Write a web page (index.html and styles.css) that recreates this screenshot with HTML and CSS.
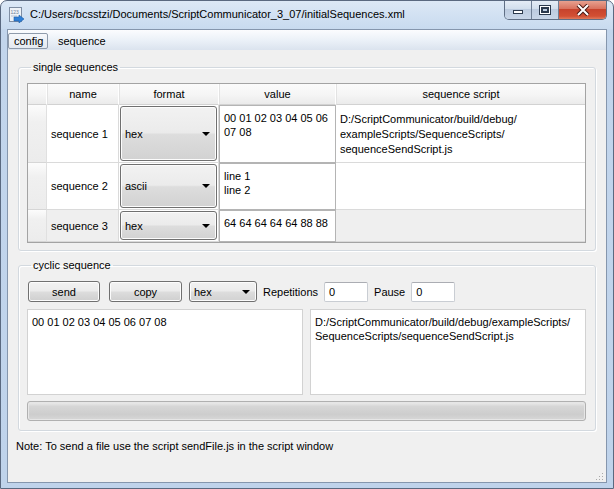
FILE: index.html
```html
<!DOCTYPE html>
<html lang="en">
<head>
    <meta charset="UTF-8">
    <title>initialSequences.xml</title>
    <link rel="stylesheet" href="styles.css">
</head>
<body>
<div class="window">
    <div class="titlebar">
        <svg class="app-icon" width="16" height="16" viewBox="0 0 16 16">
            <rect x="0.5" y="0.5" width="12" height="14" fill="#eef2f7" stroke="#7f8ea3"/>
            <text x="1.5" y="6.5" font-size="5" font-family="Liberation Sans, sans-serif" fill="#6d7f99">123</text>
            <line x1="2" y1="9" x2="8" y2="9" stroke="#b7c3d3"/>
            <polygon points="5,10 10,10 10,8 15,12 10,16 10,14 5,14" fill="#2f7fd6" stroke="#1f5fa8" stroke-width="0.6"/>
        </svg>
        <span class="title">C:/Users/bcsstzi/Documents/ScriptCommunicator_3_07/initialSequences.xml</span>
        <div class="caption-buttons">
            <div class="cap-btn cap-min">
                <svg width="12" height="6" viewBox="0 0 12 6"><rect x="1.5" y="1.5" width="9" height="3" fill="#fff" stroke="#2c3a4d"/></svg>
            </div>
            <div class="cap-btn cap-max">
                <svg width="12" height="10" viewBox="0 0 12 10"><rect x="1.5" y="1.5" width="9" height="7" fill="none" stroke="#2c3a4d" stroke-width="3"/><rect x="1.5" y="1.5" width="9" height="7" fill="none" stroke="#fff"/><rect x="3.5" y="3.5" width="5" height="3" fill="none" stroke="#2c3a4d"/></svg>
            </div>
            <div class="cap-btn cap-close">
                <svg width="14" height="12" viewBox="0 0 14 12"><path d="M2 1 L12 11 M12 1 L2 11" stroke="#4a1a14" stroke-width="4"/><path d="M2 1 L12 11 M12 1 L2 11" stroke="#fff" stroke-width="2"/></svg>
            </div>
        </div>
    </div>

    <div class="client">
        <div class="menubar">
            <span class="menu-item active">config</span>
            <span class="menu-item">sequence</span>
        </div>

        <div class="content">
            <fieldset class="group group-single">
                <legend>single sequences</legend>
                <div class="table-frame">
                    <div class="grid">
                        <div class="cell hcorner"></div>
                        <div class="cell hcell">name</div>
                        <div class="cell hcell">format</div>
                        <div class="cell hcell">value</div>
                        <div class="cell hcell last">sequence script</div>

                        <div class="cell vhead"></div>
                        <div class="cell name">sequence 1</div>
                        <div class="cell fmt"><div class="combo">hex<span class="arrow"></span></div></div>
                        <div class="cell val"><div class="editor">00 01 02 03 04 05 06<br>07 08</div></div>
                        <div class="cell script">D:/ScriptCommunicator/build/debug/<br>exampleScripts/SequenceScripts/<br>sequenceSendScript.js</div>

                        <div class="cell vhead"></div>
                        <div class="cell name">sequence 2</div>
                        <div class="cell fmt"><div class="combo">ascii<span class="arrow"></span></div></div>
                        <div class="cell val"><div class="editor">line 1<br>line 2</div></div>
                        <div class="cell script"></div>

                        <div class="cell vhead"></div>
                        <div class="cell name alt">sequence 3</div>
                        <div class="cell fmt"><div class="combo">hex<span class="arrow"></span></div></div>
                        <div class="cell val"><div class="editor">64 64 64 64 64 88 88</div></div>
                        <div class="cell script alt"></div>
                    </div>
                </div>
            </fieldset>

            <fieldset class="group group-cyclic">
                <legend>cyclic sequence</legend>
                <div class="controls">
                    <div class="button btn-send">send</div>
                    <div class="button btn-copy">copy</div>
                    <div class="combo combo-small">hex<span class="arrow"></span></div>
                    <span class="label lbl-rep">Repetitions</span>
                    <div class="textbox">0</div>
                    <span class="label lbl-pause">Pause</span>
                    <div class="textbox">0</div>
                </div>
                <div class="text-areas">
                    <div class="textarea">00 01 02 03 04 05 06 07 08</div>
                    <div class="textarea">D:/ScriptCommunicator/build/debug/exampleScripts/<br>SequenceScripts/sequenceSendScript.js</div>
                </div>
                <div class="progress"></div>
            </fieldset>

            <p class="note">Note: To send a file use the script sendFile.js in the script window</p>
        </div>

        <svg class="size-grip" width="9" height="9" viewBox="0 0 9 9">
            <rect x="7" y="1" width="1" height="1" fill="#a9a9a9"/>
            <rect x="4" y="4" width="1" height="1" fill="#a9a9a9"/>
            <rect x="7" y="4" width="1" height="1" fill="#a9a9a9"/>
            <rect x="1" y="7" width="1" height="1" fill="#a9a9a9"/>
            <rect x="4" y="7" width="1" height="1" fill="#a9a9a9"/>
            <rect x="7" y="7" width="1" height="1" fill="#a9a9a9"/>
        </svg>
    </div>
</div>
</body>
</html>
```

FILE: styles.css
```css
* {
    box-sizing: border-box;
}
body {
    margin: 0;
    font-family: "Liberation Sans", Arial, sans-serif;
    font-size: 11px;
    color: #000;
    background: #fff;
}
.window {
    width: 614px;
    height: 489px;
    border: 1px solid #5a6980;
    border-radius: 7px 7px 0 0;
    background: linear-gradient(#dce8f6 0, #c8daef 28px, #c2d5ec 29px, #bfd3eb 100%);
    display: flex;
    flex-direction: column;
    overflow: hidden;
}
.titlebar {
    height: 28px;
    display: flex;
    align-items: flex-start;
    padding-left: 8px;
}
.app-icon {
    margin-top: 6px;
    flex: none;
}
.title {
    margin-left: 5px;
    margin-top: 7px;
    font-size: 11px;
    color: #000;
}
.caption-buttons {
    margin-left: auto;
    margin-right: 6px;
    display: flex;
    height: 20px;
    margin-top: -1px;
    border: 1px solid #5f6e84;
    border-top: none;
    border-radius: 0 0 5px 5px;
    overflow: hidden;
}
.cap-btn {
    height: 19px;
    display: flex;
    align-items: center;
    justify-content: center;
    background: linear-gradient(#e7eef7 0, #d3dfed 45%, #bccbdf 50%, #c8d6e8 100%);
}
.cap-min {
    width: 27px;
    border-right: 1px solid #6f7f95;
    padding-top: 5px;
}
.cap-max {
    width: 27px;
    border-right: 1px solid #6f7f95;
}
.cap-close {
    width: 47px;
    background: linear-gradient(#e9a796 0, #d9735f 45%, #c7432c 50%, #d24f33 85%, #e07a5c 100%);
}
.client {
    flex: 1;
    margin: 0 6px 5px 6px;
    border: 1px solid #8596ad;
    background: #f0f0f0;
    display: flex;
    flex-direction: column;
    position: relative;
}
.menubar {
    height: 20px;
    display: flex;
    align-items: center;
    background: linear-gradient(#fbfcfe 0, #eaf0f7 55%, #dbe3ee 100%);
}
.menu-item {
    height: 16px;
    line-height: 14px;
    padding: 0 7px;
    border: 1px solid transparent;
    margin-top: 1px;
}
.menu-item.active {
    border: 1px solid #8f9bab;
    border-radius: 2px;
    background: linear-gradient(#f6f8fb, #e4e9f0);
    padding: 0 5px;
    width: 40px;
    text-align: center;
    margin-right: 2px;
}
.content {
    flex: 1;
    padding: 10px 10px 0 10px;
    display: flex;
    flex-direction: column;
}
.group {
    margin: 0;
    border: 1px solid #d3d9df;
    border-radius: 3px;
    box-shadow: inset 1px 1px 0 #fff, 1px 1px 0 #fff;
    padding: 9px 9px 7px 8px;
    min-width: 0;
}
.group legend {
    padding: 0 2px;
    margin-left: 4px;
    line-height: 14px;
}
.group-cyclic {
    margin-top: 7px;
    padding-top: 9px;
    padding-bottom: 9px;
}
.table-frame {
    border: 1px solid #a3a3a3;
    background: #fff;
}
.grid {
    display: grid;
    grid-template-columns: 19px 72px 100px 117px 249px;
    grid-template-rows: 21px 58px 47px 32px;
}
.cell {
    border-right: 1px solid #dadada;
    border-bottom: 1px solid #dadada;
    display: flex;
    align-items: center;
    background: #fff;
}
.hcorner, .hcell {
    background: linear-gradient(#fbfbfb 0, #f5f5f5 55%, #ebebeb 100%);
    border-right: 1px solid #fff;
    border-left: 1px solid #e3e3e3;
    border-bottom: 1px solid #d2d2d2;
}
.hcorner {
    border-left: none;
}
.hcell {
    justify-content: center;
    padding-bottom: 1px;
}
.hcell.last {
    border-right: none;
}
.vhead {
    background: linear-gradient(#fcfcfc 0, #f0f0f0 30%, #ececec 100%);
    border-right: 1px solid #e0e0e0;
    border-bottom: 1px solid #d6d6d6;
}
.name {
    padding-left: 4px;
}
.alt {
    background: #efefef;
}
.fmt {
    padding: 1px;
    align-items: stretch;
}
.fmt .combo {
    flex: 1;
}
.combo {
    position: relative;
    display: flex;
    align-items: center;
    padding-left: 4px;
    border: 1px solid #707070;
    border-radius: 3px;
    background: linear-gradient(#f2f2f2 0, #ebebeb 48%, #dddddd 52%, #d2d2d2 100%);
    box-shadow: inset 0 0 0 1px #fcfcfc;
}
.arrow {
    position: absolute;
    right: 6px;
    top: 50%;
    margin-top: -2px;
    border-left: 4px solid transparent;
    border-right: 4px solid transparent;
    border-top: 4px solid #000;
}
.val {
    border: none;
    align-items: stretch;
}
.editor {
    flex: 1;
    border: 1px solid #b4b4b4;
    background: #fff;
    padding: 5px 4px 0 4px;
    line-height: 14px;
}
.script {
    align-items: flex-start;
    padding: 7px 4px 0 4px;
    line-height: 15px;
    border-right: none;
}
.controls {
    display: flex;
    align-items: center;
    height: 21px;
}
.button {
    height: 21px;
    width: 72px;
    display: flex;
    align-items: center;
    justify-content: center;
    border: 1px solid #707070;
    border-radius: 3px;
    background: linear-gradient(#f2f2f2 0, #ebebeb 48%, #dddddd 52%, #cfcfcf 100%);
    box-shadow: inset 0 0 0 1px #fcfcfc;
}
.btn-send {
    margin-left: 1px;
}
.btn-copy {
    margin-left: 9px;
    width: 73px;
}
.combo-small {
    margin-left: 7px;
    width: 68px;
    height: 21px;
}
.label {
    margin-left: 6px;
}
.textbox {
    margin-left: 6px;
    width: 44px;
    height: 20px;
    border: 1px solid #c9cdd3;
    border-top-color: #abadb3;
    border-radius: 2px;
    background: #fff;
    padding-left: 4px;
    line-height: 18px;
}
.text-areas {
    display: flex;
    gap: 7px;
    margin-top: 7px;
    height: 86px;
}
.textarea {
    flex: 1;
    border: 1px solid #d2d2d2;
    background: #fff;
    padding: 5px 4px;
    line-height: 14px;
}
.progress {
    margin-top: 6px;
    height: 20px;
    border: 1px solid #b0b0b0;
    border-radius: 3px;
    background: linear-gradient(#ededed 0, #d6d6d6 25%, #cdcdcd 70%, #d8d8d8 100%);
    box-shadow: inset 0 0 0 1px #e6e6e6;
}
.note {
    margin: 8px 0 0 -2px;
    line-height: 14px;
}
.size-grip {
    position: absolute;
    right: 2px;
    bottom: 1px;
}
```
